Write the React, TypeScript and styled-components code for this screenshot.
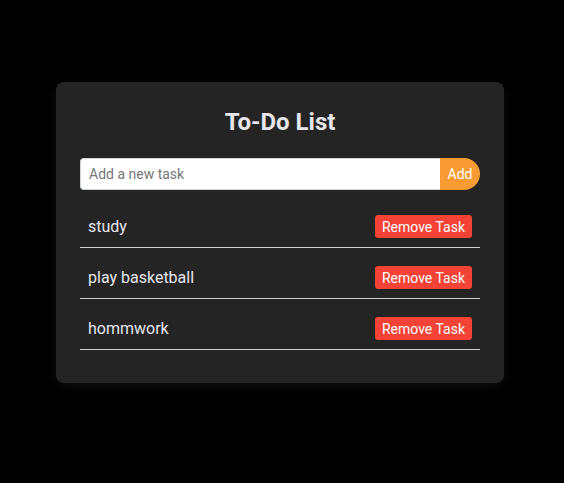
import React, { useState } from "react";
import styled, { createGlobalStyle } from "styled-components";

const Global = createGlobalStyle`
  html, body { margin: 0; padding: 0; background: #000; }
  body { font-family: Roboto, "Liberation Sans", sans-serif; }
  * { box-sizing: border-box; }
`;

const Page = styled.div`
  min-height: 483px;
  padding: 82px 0 0 56px;
`;

const Card = styled.div`
  width: 448px;
  background: #242424;
  border-radius: 8px;
  padding: 24px 24px 33px;
  box-shadow: 0 4px 12px rgba(40, 40, 40, 0.35);
`;

const Title = styled.h1`
  margin: 0 0 21px;
  padding-top: 1px;
  text-align: center;
  font-size: 24px;
  font-weight: 700;
  line-height: 30px;
  color: #e6e6ec;
`;

const Form = styled.div`
  display: flex;
  height: 32px;
`;

const Input = styled.input`
  flex: 1;
  height: 32px;
  border: 1px solid #cfd3da;
  border-right: none;
  border-radius: 4px 0 0 4px;
  padding: 0 8px;
  font-family: Roboto, "Liberation Sans", sans-serif;
  font-size: 14px;
  color: #333;
  background: #fff;
  outline: none;
  &::placeholder { color: #767676; }
`;

const AddButton = styled.button`
  width: 40px;
  height: 32px;
  border: none;
  border-radius: 0 16px 16px 0;
  background: #f89b33;
  color: #fff;
  font-family: Roboto, "Liberation Sans", sans-serif;
  font-size: 14px;
  padding: 0;
  cursor: pointer;
`;

const List = styled.ul`
  list-style: none;
  margin: 16px 0 0;
  padding: 0;
`;

const Item = styled.li`
  display: flex;
  align-items: center;
  justify-content: space-between;
  margin-top: 9px;
  padding: 9px 8px;
  border-bottom: 1px solid #d0d0d0;
  &:first-child { margin-top: 0; }
`;

const TaskText = styled.span`
  font-size: 16px;
  color: #e6e6ec;
`;

const RemoveButton = styled.button`
  height: 23px;
  padding: 0 7px;
  border: none;
  border-radius: 3px;
  background: #f44336;
  color: #fff;
  font-family: Roboto, "Liberation Sans", sans-serif;
  font-size: 14px;
  cursor: pointer;
`;

export default function App() {
  const [tasks, setTasks] = useState(["study", "play basketball", "hommwork"]);
  const [value, setValue] = useState("");
  return (
    <Page>
      <Global />
      <Card>
        <Title>To-Do List</Title>
        <Form>
          <Input
            placeholder="Add a new task"
            value={value}
            onChange={(e) => setValue(e.target.value)}
          />
          <AddButton
            onClick={() => {
              if (value.trim()) {
                setTasks([...tasks, value.trim()]);
                setValue("");
              }
            }}
          >
            Add
          </AddButton>
        </Form>
        <List>
          {tasks.map((t, i) => (
            <Item key={i}>
              <TaskText>{t}</TaskText>
              <RemoveButton onClick={() => setTasks(tasks.filter((_, j) => j !== i))}>
                Remove Task
              </RemoveButton>
            </Item>
          ))}
        </List>
      </Card>
    </Page>
  );
}
